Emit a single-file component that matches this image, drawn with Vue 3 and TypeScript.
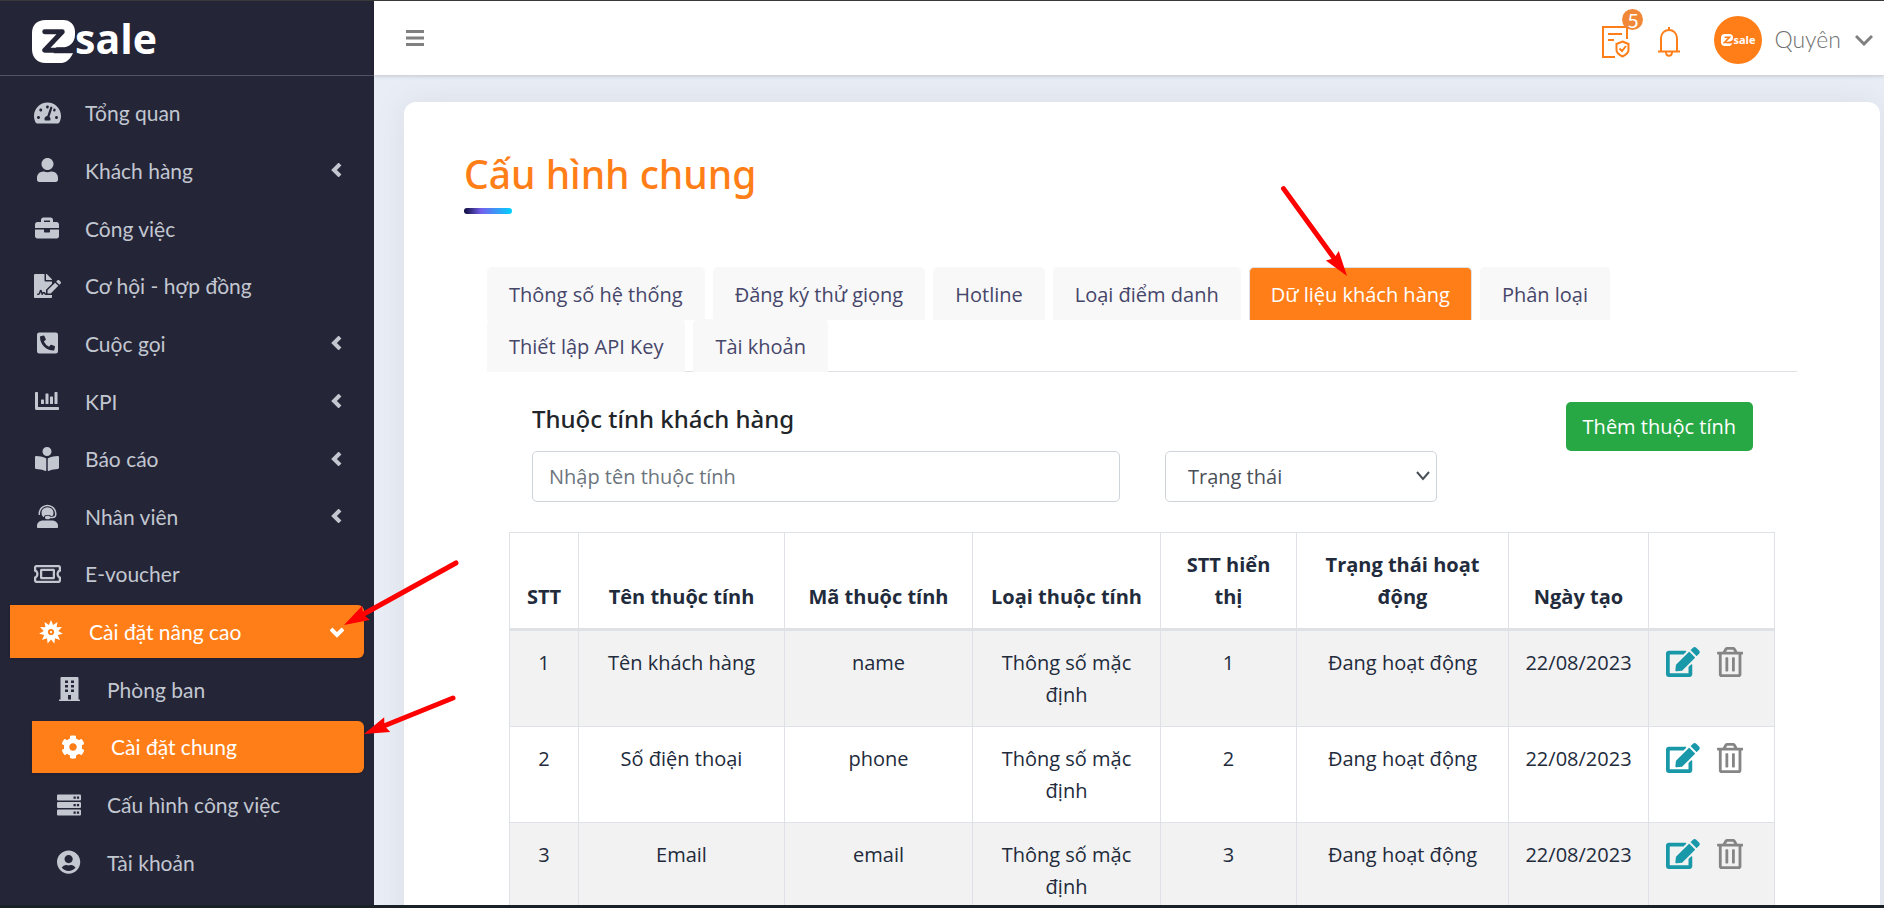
<script setup lang="ts">
import { ref } from 'vue'

interface Icon {
  box: string
  paths: string[]
}

interface NavItem {
  label: string
  icon: string
  expandable?: boolean
  open?: boolean
  children?: NavItem[]
  current?: boolean
}

interface Attribute {
  order: number
  name: string
  code: string
  kind: string
  position: number
  status: string
  created: string
}

interface Arrow {
  x: number
  y: number
  angle: number
  length: number
}

/** Outline of a star with the given number of spikes, centred in a 512 box. */
function starPath(spikes: number, outer: number, inner: number): string {
  const points: string[] = []
  for (let i = 0; i < spikes * 2; i++) {
    const radius = i % 2 === 0 ? outer : inner
    const angle = (Math.PI * i) / spikes - Math.PI / 2
    points.push(`${Math.round(256 + radius * Math.cos(angle))} ${Math.round(256 + radius * Math.sin(angle))}`)
  }
  return `M${points.join('L')}z`
}

const markPath =
  'M14 0h18c7 0 12 5 12 12v3c0 8-6 13-13 13h-6l-3 6h20c-3 6-7 10-12 10H14C5 44 0 38 0 30V14C0 5 5 0 14 0z'
const markStroke = 'M13 12h18L13 31h30'

const icons: Record<string, Icon> = {
  gauge: {
    box: '0 0 576 512',
    paths: [
      'M288 32C128.94 32 0 160.94 0 320c0 52.8 14.25 102.26 39.06 144.8 5.61 9.62 16.3 15.2 27.44 15.2h443c11.14 0 21.83-5.58 27.44-15.2C561.75 422.26 576 372.8 576 320c0-159.06-128.94-288-288-288zm0 64c14.71 0 26.58 10.13 30.32 23.65-1.11 2.26-2.64 4.23-3.45 6.67l-9.22 27.67c-5.13 3.49-10.97 6.01-17.64 6.01-17.67 0-32-14.33-32-32S270.33 96 288 96zM96 384c-17.67 0-32-14.33-32-32s14.33-32 32-32 32 14.33 32 32-14.33 32-32 32zm48-160c-17.67 0-32-14.33-32-32s14.33-32 32-32 32 14.33 32 32-14.33 32-32 32zm246.77-72.41l-61.33 184C343.13 347.33 352 364.54 352 384c0 11.72-3.38 22.55-8.88 32H232.88c-5.5-9.45-8.88-20.28-8.88-32 0-33.94 26.5-61.43 59.9-63.59l61.34-184.01c4.17-12.56 17.73-19.45 30.36-15.17 12.57 4.19 19.35 17.79 15.17 30.36zm14.66 57.2l15.52-46.55c3.47-1.29 7.13-2.23 11.05-2.23 17.67 0 32 14.33 32 32s-14.33 32-32 32c-11.38-.01-20.89-6.28-26.57-15.22zM480 384c-17.67 0-32-14.33-32-32s14.33-32 32-32 32 14.33 32 32-14.33 32-32 32z',
    ],
  },
  user: {
    box: '0 0 448 512',
    paths: [
      'M224 256c70.7 0 128-57.3 128-128S294.7 0 224 0 96 57.3 96 128s57.3 128 128 128zm89.6 32h-16.7c-22.2 10.2-46.9 16-72.9 16s-50.6-5.8-72.9-16h-16.7C60.2 288 0 348.2 0 422.4V464c0 26.5 21.5 48 48 48h352c26.5 0 48-21.5 48-48v-41.6c0-74.2-60.2-134.4-134.4-134.4z',
    ],
  },
  briefcase: {
    box: '0 0 512 512',
    paths: [
      'M320 336c0 8.84-7.16 16-16 16h-96c-8.84 0-16-7.16-16-16v-48H0v144c0 25.6 22.4 48 48 48h416c25.6 0 48-22.4 48-48V288H320v48zm144-208h-80V80c0-25.6-22.4-48-48-48H176c-25.6 0-48 22.4-48 48v48H48c-25.6 0-48 22.4-48 48v80h512v-80c0-25.6-22.4-48-48-48zm-144 0H192V96h128v32z',
    ],
  },
  contract: {
    box: '0 0 576 512',
    paths: [
      'M218.17 424.14c-2.95-5.92-8.09-6.52-10.17-6.52s-7.22.59-10.02 6.19l-7.67 15.34c-6.37 12.78-25.03 11.37-29.48-2.09L144 386.59l-10.61 31.88c-5.89 17.66-22.38 29.53-41 29.53H80c-8.84 0-16-7.16-16-16s7.16-16 16-16h12.39c4.83 0 9.11-3.08 10.64-7.66l18.19-54.64c3.3-9.81 12.44-16.41 22.78-16.41s19.48 6.59 22.77 16.41l13.88 41.64c19.75-16.19 54.06-9.7 66 14.16 1.89 3.78 5.49 5.95 9.36 6.26v-82.12l128-127.09V160H248c-13.2 0-24-10.8-24-24V0H24C10.7 0 0 10.7 0 24v464c0 13.3 10.7 24 24 24h336c13.3 0 24-10.7 24-24v-40l-128-.11c-16.12-.31-30.58-9.28-37.83-23.75zM384 121.9c0-6.3-2.5-12.4-7-16.9L279.1 7c-4.5-4.5-10.6-7-17-7H256v128h128v-6.1zm-96 225.06V416h68.99l161.68-162.78-67.88-67.88L288 346.96zm280.54-179.63l-31.87-31.87c-9.94-9.94-26.07-9.94-36.01 0l-27.25 27.25 67.88 67.88 27.25-27.25c9.95-9.94 9.95-26.07 0-36.01z',
    ],
  },
  phone: {
    box: '0 0 448 512',
    paths: [
      'M400 32H48A48 48 0 0 0 0 80v352a48 48 0 0 0 48 48h352a48 48 0 0 0 48-48V80a48 48 0 0 0-48-48zm-16.39 307.37l-15 65A15 15 0 0 1 354 416C194 416 64 286.29 64 126a15.7 15.7 0 0 1 11.63-14.61l65-15A18.23 18.23 0 0 1 144 96a16.27 16.27 0 0 1 13.79 9.09l30 70A17.9 17.9 0 0 1 189 181a17 17 0 0 1-5.5 11.61l-37.89 31a231.91 231.91 0 0 0 110.78 110.78l31-37.89A17 17 0 0 1 299 291a17.85 17.85 0 0 1 5.91 1.21l70 30A16.25 16.25 0 0 1 384 336a17.41 17.41 0 0 1-.39 3.37z',
    ],
  },
  chart: {
    box: '0 0 512 512',
    paths: [
      'M332.8 320h38.4c6.4 0 12.8-6.4 12.8-12.8V172.8c0-6.4-6.4-12.8-12.8-12.8h-38.4c-6.4 0-12.8 6.4-12.8 12.8v134.4c0 6.4 6.4 12.8 12.8 12.8zm96 0h38.4c6.4 0 12.8-6.4 12.8-12.8V76.8c0-6.4-6.4-12.8-12.8-12.8h-38.4c-6.4 0-12.8 6.4-12.8 12.8v230.4c0 6.4 6.4 12.8 12.8 12.8zm-288 0h38.4c6.4 0 12.8-6.4 12.8-12.8v-70.4c0-6.4-6.4-12.8-12.8-12.8h-38.4c-6.4 0-12.8 6.4-12.8 12.8v70.4c0 6.4 6.4 12.8 12.8 12.8zm96 0h38.4c6.4 0 12.8-6.4 12.8-12.8V108.8c0-6.4-6.4-12.8-12.8-12.8h-38.4c-6.4 0-12.8 6.4-12.8 12.8v198.4c0 6.4 6.4 12.8 12.8 12.8zM496 384H64V80c0-8.84-7.16-16-16-16H16C7.16 64 0 71.16 0 80v336c0 17.67 14.33 32 32 32h464c8.84 0 16-7.16 16-16v-32c0-8.84-7.16-16-16-16z',
    ],
  },
  reader: {
    box: '0 0 512 512',
    paths: [
      'M352 96c0-53.02-42.98-96-96-96s-96 42.98-96 96 42.98 96 96 96 96-42.98 96-96zM233.59 241.1c-59.33-36.32-155.43-46.3-203.79-49.05C13.55 191.13 0 203.51 0 219.14v222.8c0 14.33 11.59 26.28 26.49 27.05 43.66 2.29 131.99 10.68 193.04 41.43 9.37 4.72 20.48-1.71 20.48-11.87V252.56c-.01-4.67-2.32-8.95-6.42-11.46zm248.61-49.05c-48.35 2.74-144.46 12.73-203.78 49.05-4.1 2.51-6.41 6.96-6.41 11.63v245.79c0 10.19 11.14 16.63 20.54 11.9 61.04-30.72 149.32-39.11 192.97-41.4 14.9-.78 26.49-12.73 26.49-27.06V219.14c-.01-15.63-13.56-28.01-29.81-27.09z',
    ],
  },
  agent: {
    box: '0 0 448 512',
    paths: [
      'M32 208c0-106 86-192 192-192s192 86 192 192v16c0 44-36 80-80 80h-56c-8 14-20 20-34 20h-36c-22 0-40-16-40-36s18-38 40-38h36c14 0 26 8 34 20h56c27 0 48-21 48-48v-14c0-88-72-160-160-160S64 120 64 208v24H48c-10 0-16-8-16-16z',
      'M96 184a128 116 0 0 1 256 0c0 30-6 52-20 72h-34c-10-14-26-22-46-22h-48c-30 0-52 18-58 46-32-20-50-54-50-96z',
      'M128 352h192c70 0 128 48 128 108v28c0 14-10 24-24 24H24c-14 0-24-10-24-24v-28c0-60 58-108 128-108z',
    ],
  },
  ticket: {
    box: '0 0 576 512',
    paths: [
      'M48 64h480c26 0 48 22 48 48v88c-30 0-48 26-48 56s18 56 48 56v88c0 26-22 48-48 48H48c-26 0-48-22-48-48v-88c30 0 48-26 48-56s-18-56-48-56v-88c0-26 22-48 48-48zm0 48v52c30 18 48 54 48 92s-18 74-48 92v52h480v-52c-30-18-48-54-48-92s18-74 48-92v-52z',
      'M160 144h256c18 0 32 14 32 32v160c0 18-14 32-32 32H160c-18 0-32-14-32-32V176c0-18 14-32 32-32zm16 48v128h224V192z',
    ],
  },
  burst: {
    box: '0 0 512 512',
    paths: [
      starPath(11, 256, 158) + 'M256 190a66 66 0 1 0 0 132 66 66 0 0 0 0-132zm0 42a24 24 0 1 1 0 48 24 24 0 0 1 0-48z',
    ],
  },
  building: {
    box: '0 0 448 512',
    paths: [
      'M436 480h-20V24c0-13-11-24-24-24H56C43 0 32 11 32 24v456H12c-7 0-12 5-12 12v20h448v-20c0-7-5-12-12-12zM128 76h64v52h-64zm0 96h64v52h-64zm0 96h64v52h-64zm128-192h64v52h-64zm0 96h64v52h-64zm0 96h64v52h-64zM192 384h64v96h-64z',
    ],
  },
  cog: {
    box: '0 0 512 512',
    paths: [
      'M487.4 315.7l-42.6-24.6c4.3-23.2 4.3-47 0-70.2l42.6-24.6c4.9-2.8 7.1-8.6 5.5-14-11.1-35.6-30-67.8-54.7-94.6-3.8-4.1-10-5.1-14.8-2.3L380.8 110c-17.9-15.4-38.5-27.3-60.8-35.1V25.8c0-5.6-3.9-10.5-9.4-11.7-36.7-8.2-74.3-7.8-109.2 0-5.5 1.2-9.4 6.1-9.4 11.7V75c-22.2 7.9-42.8 19.8-60.8 35.1L88.7 85.5c-4.9-2.8-11-1.9-14.8 2.3-24.7 26.7-43.6 58.9-54.7 94.6-1.7 5.4.6 11.2 5.5 14L67.3 221c-4.3 23.2-4.3 47 0 70.2l-42.6 24.6c-4.9 2.8-7.1 8.6-5.5 14 11.1 35.6 30 67.8 54.7 94.6 3.8 4.1 10 5.1 14.8 2.3l42.6-24.6c17.9 15.4 38.5 27.3 60.8 35.1v49.2c0 5.6 3.9 10.5 9.4 11.7 36.7 8.2 74.3 7.8 109.2 0 5.5-1.2 9.4-6.1 9.4-11.7v-49.2c22.2-7.9 42.8-19.8 60.8-35.1l42.6 24.6c4.9 2.8 11 1.9 14.8-2.3 24.7-26.7 43.6-58.9 54.7-94.6 1.5-5.5-.7-11.3-5.6-14.1zM256 336c-44.1 0-80-35.9-80-80s35.9-80 80-80 80 35.9 80 80-35.9 80-80 80z',
    ],
  },
  server: {
    box: '0 0 512 512',
    paths: [
      'M24 32h464a24 24 0 0 1 24 24v80a24 24 0 0 1-24 24H24a24 24 0 0 1-24-24V56a24 24 0 0 1 24-24zm328 40v48h48V72zm72 0v48h48V72z',
      'M24 192h464a24 24 0 0 1 24 24v80a24 24 0 0 1-24 24H24a24 24 0 0 1-24-24v-80a24 24 0 0 1 24-24zm328 40v48h48v-48zm72 0v48h48v-48z',
      'M24 352h464a24 24 0 0 1 24 24v80a24 24 0 0 1-24 24H24a24 24 0 0 1-24-24v-80a24 24 0 0 1 24-24zm328 40v48h48v-48zm72 0v48h48v-48z',
    ],
  },
  account: {
    box: '0 0 496 512',
    paths: [
      'M248 8C111 8 0 119 0 256s111 248 248 248 248-111 248-248S385 8 248 8zm0 96c48.6 0 88 39.4 88 88s-39.4 88-88 88-88-39.4-88-88 39.4-88 88-88zm0 344c-58.7 0-111.3-26.6-146.5-68.2 18.8-35.4 55.6-59.8 98.5-59.8 2.4 0 4.8.4 7.1 1.1 13 4.2 26.6 6.9 40.9 6.9 14.3 0 28-2.7 40.9-6.9 2.3-.7 4.7-1.1 7.1-1.1 42.9 0 79.7 24.4 98.5 59.8C359.3 421.4 306.7 448 248 448z',
    ],
  },
}

const nav = ref<NavItem[]>([
  { label: 'Tổng quan', icon: 'gauge' },
  { label: 'Khách hàng', icon: 'user', expandable: true },
  { label: 'Công việc', icon: 'briefcase' },
  { label: 'Cơ hội - hợp đồng', icon: 'contract' },
  { label: 'Cuộc gọi', icon: 'phone', expandable: true },
  { label: 'KPI', icon: 'chart', expandable: true },
  { label: 'Báo cáo', icon: 'reader', expandable: true },
  { label: 'Nhân viên', icon: 'agent', expandable: true },
  { label: 'E-voucher', icon: 'ticket' },
  {
    label: 'Cài đặt nâng cao',
    icon: 'burst',
    expandable: true,
    open: true,
    current: true,
    children: [
      { label: 'Phòng ban', icon: 'building' },
      { label: 'Cài đặt chung', icon: 'cog', current: true },
      { label: 'Cấu hình công việc', icon: 'server' },
      { label: 'Tài khoản', icon: 'account' },
    ],
  },
])

const tabs = [
  'Thông số hệ thống',
  'Đăng ký thử giọng',
  'Hotline',
  'Loại điểm danh',
  'Dữ liệu khách hàng',
  'Phân loại',
  'Thiết lập API Key',
  'Tài khoản',
]
const activeTab = ref('Dữ liệu khách hàng')

const query = ref('')
const status = ref('')

const rows: Attribute[] = [
  { order: 1, name: 'Tên khách hàng', code: 'name' },
  { order: 2, name: 'Số điện thoại', code: 'phone' },
  { order: 3, name: 'Email', code: 'email' },
].map((row) => ({
  ...row,
  kind: 'Thông số mặc định',
  position: row.order,
  status: 'Đang hoạt động',
  created: '22/08/2023',
}))

const arrows: Arrow[] = [
  { x: 1347, y: 276, angle: 54, length: 108 },
  { x: 344, y: 625, angle: 151, length: 128 },
  { x: 364, y: 734, angle: 158, length: 96 },
]
</script>

<template>
  <div class="page">
    <aside class="sidebar">
      <a class="brand" href="#" aria-label="zsale">
        <svg class="brand-mark" viewBox="0 0 44 44" aria-hidden="true">
          <path :d="markPath" />
          <path class="brand-z" :d="markStroke" />
        </svg>
        <span class="brand-word">sale</span>
      </a>
      <nav aria-label="Menu">
        <ul class="menu">
          <li v-for="item in nav" :key="item.label" class="menu-entry">
            <a href="#" class="menu-link" :class="{ current: item.current }" :aria-expanded="item.expandable ? !!item.open : undefined">
              <span class="menu-icon">
                <svg :viewBox="icons[item.icon].box" aria-hidden="true">
                  <path v-for="d in icons[item.icon].paths" :key="d" :d="d" fill-rule="evenodd" />
                </svg>
              </span>
              <span class="menu-label">{{ item.label }}</span>
              <svg v-if="item.expandable" class="caret" :class="{ open: item.open }" viewBox="0 0 14 14" aria-hidden="true">
                <path d="M10 1L4 7l6 6" />
              </svg>
            </a>
            <ul v-if="item.children" class="submenu">
              <li v-for="child in item.children" :key="child.label" class="submenu-entry">
                <a href="#" class="menu-link sub" :class="{ current: child.current }">
                  <span class="menu-icon">
                    <svg :viewBox="icons[child.icon].box" aria-hidden="true">
                      <path v-for="d in icons[child.icon].paths" :key="d" :d="d" fill-rule="evenodd" />
                    </svg>
                  </span>
                  <span class="menu-label">{{ child.label }}</span>
                </a>
              </li>
            </ul>
          </li>
        </ul>
      </nav>
    </aside>

    <div class="content">
      <header class="topbar">
        <button type="button" class="plain" aria-label="Menu">
          <svg class="bars" viewBox="0 0 18 16" aria-hidden="true"><path d="M0 1.5h18M0 8h18M0 14.5h18" /></svg>
        </button>
        <div class="topbar-tools">
          <button type="button" class="plain tasks" aria-label="5">
            <svg viewBox="0 0 28 32" aria-hidden="true">
              <path d="M25 13V1H1v30h12M6 8h14M6 14h6" />
              <path d="M20.5 15.5l6 2.500v6c0 3-3 5-6 6.500-3-1.500-6-3.500-6-6.500v-6z" />
              <path d="M17.500 22.500l2.500 2.500 4-5" />
            </svg>
            <span class="badge">5</span>
          </button>
          <button type="button" class="plain bell" aria-label="Chuông">
            <svg viewBox="0 0 22 30" aria-hidden="true">
              <path d="M3 24V11c0-5 4-8 8-8s8 3 8 8v13M0 24.5h22M11 3V0M8 25c0 5 6 5 6 0" />
            </svg>
          </button>
          <button type="button" class="plain account">
            <span class="avatar">
              <svg class="avatar-mark" viewBox="0 0 44 44" aria-hidden="true">
                <path :d="markPath" />
                <path class="avatar-z" :d="markStroke" />
              </svg>
              <span class="avatar-word">sale</span>
            </span>
            <span class="account-name">Quyên</span>
            <svg class="account-caret" viewBox="0 0 18 12" aria-hidden="true"><path d="M1 2l8 8 8-8" /></svg>
          </button>
        </div>
      </header>

      <main class="main">
        <section class="card">
          <h1 class="title">Cấu hình chung</h1>
          <div class="tabs-area">
            <div class="tabs" role="tablist">
              <button
                v-for="tab in tabs"
                :key="tab"
                type="button"
                role="tab"
                class="tab"
                :class="{ active: tab === activeTab }"
                :aria-selected="tab === activeTab"
                @click="activeTab = tab"
              >
                {{ tab }}
              </button>
            </div>

            <div class="panel" role="tabpanel">
              <div class="panel-head">
                <h2>Thuộc tính khách hàng</h2>
                <button type="button" class="add">Thêm thuộc tính</button>
              </div>
              <form class="filters" @submit.prevent>
                <input v-model="query" class="field search" type="text" aria-label="Nhập tên thuộc tính" placeholder="Nhập tên thuộc tính" />
                <div class="select-wrap">
                  <select v-model="status" class="field" aria-label="Trạng thái">
                    <option value="">Trạng thái</option>
                    <option value="active">Đang hoạt động</option>
                  </select>
                  <svg class="select-caret" viewBox="0 0 14 10" aria-hidden="true"><path d="M1 1l6 7 6-7" /></svg>
                </div>
              </form>
              <table class="grid">
                <colgroup>
                  <col class="c-order" />
                  <col class="c-name" />
                  <col class="c-code" />
                  <col class="c-code" />
                  <col class="c-position" />
                  <col class="c-status" />
                  <col class="c-date" />
                  <col class="c-actions" />
                </colgroup>
                <thead>
                  <tr>
                    <th scope="col">STT</th>
                    <th scope="col">Tên thuộc tính</th>
                    <th scope="col">Mã thuộc tính</th>
                    <th scope="col">Loại thuộc tính</th>
                    <th scope="col">STT hiển thị</th>
                    <th scope="col">Trạng thái hoạt động</th>
                    <th scope="col">Ngày tạo</th>
                    <td></td>
                  </tr>
                </thead>
                <tbody>
                  <tr v-for="row in rows" :key="row.order">
                    <td>{{ row.order }}</td>
                    <td>{{ row.name }}</td>
                    <td>{{ row.code }}</td>
                    <td>{{ row.kind }}</td>
                    <td>{{ row.position }}</td>
                    <td>{{ row.status }}</td>
                    <td>{{ row.created }}</td>
                    <td>
                      <div class="actions">
                        <button type="button" class="plain edit" aria-label="Sửa">
                          <svg viewBox="0 0 576 512" aria-hidden="true">
                            <path d="M402.6 83.2l90.2 90.2c3.8 3.8 3.8 10 0 13.8L274.4 405.6l-92.8 10.3c-12.4 1.4-22.9-9.1-21.5-21.5l10.3-92.8L388.8 83.2c3.8-3.8 10-3.8 13.8 0zm162-22.9l-48.8-48.8c-15.2-15.2-39.9-15.2-55.2 0l-35.4 35.4c-3.8 3.8-3.8 10 0 13.8l90.2 90.2c3.8 3.8 10 3.8 13.8 0l35.4-35.4c15.2-15.3 15.2-40 0-55.2zM384 346.2V448H64V128h229.8c3.2 0 6.2-1.3 8.5-3.5l40-40c7.6-7.6 2.2-20.5-8.5-20.5H48C21.5 64 0 85.5 0 112v352c0 26.5 21.5 48 48 48h352c26.5 0 48-21.5 48-48V306.2c0-10.7-12.9-16-20.5-8.5l-40 40c-2.2 2.3-3.5 5.3-3.5 8.5z" />
                          </svg>
                        </button>
                        <button type="button" class="plain remove" aria-label="Xóa">
                          <svg viewBox="0 0 448 512" aria-hidden="true">
                            <path d="M268 416h24a12 12 0 0 0 12-12V188a12 12 0 0 0-12-12h-24a12 12 0 0 0-12 12v216a12 12 0 0 0 12 12zM432 80h-82.41l-34-56.7A48 48 0 0 0 274.41 0H173.59a48 48 0 0 0-41.16 23.3L98.41 80H16A16 16 0 0 0 0 96v16a16 16 0 0 0 16 16h16v336a48 48 0 0 0 48 48h288a48 48 0 0 0 48-48V128h16a16 16 0 0 0 16-16V96a16 16 0 0 0-16-16zM171.84 50.91A6 6 0 0 1 177 48h94a6 6 0 0 1 5.15 2.91L293.61 80H154.39zM368 464H80V128h288zm-212-48h24a12 12 0 0 0 12-12V188a12 12 0 0 0-12-12h-24a12 12 0 0 0-12 12v216a12 12 0 0 0 12 12z" />
                          </svg>
                        </button>
                      </div>
                    </td>
                  </tr>
                </tbody>
              </table>
            </div>
          </div>
        </section>
      </main>
    </div>

    <svg class="pointers" aria-hidden="true">
      <g v-for="arrow in arrows" :key="arrow.angle" :transform="`translate(${arrow.x} ${arrow.y}) rotate(${arrow.angle})`">
        <line :x1="-arrow.length" y1="0" x2="-20" y2="0" />
        <path d="M0 0L-25 -8L-22 0L-25 8z" />
      </g>
    </svg>
  </div>
</template>

<style>
body {
  margin: 0;
}
</style>

<style scoped>
.page,
.page * {
  box-sizing: border-box;
}

.page {
  position: relative;
  display: flex;
  height: 100vh;
  overflow: hidden;
  border-top: 1px solid #3a3838;
  border-bottom: 3px solid #1a2126;
  font-family: 'Open Sans', 'Noto Sans', sans-serif;
  font-size: 20px;
  color: #222b3c;
}

.plain {
  padding: 0;
  border: 0;
  background: none;
  cursor: pointer;
}

svg {
  display: block;
}

ul {
  margin: 0;
  padding: 0;
  list-style: none;
}

/* Sidebar */
.sidebar {
  display: flex;
  flex: 0 0 374px;
  flex-direction: column;
  background: #252538;
  font-family: Lato, 'Noto Sans', sans-serif;
  font-size: 21px;
  color: #c2c7d0;
}

.brand {
  display: flex;
  align-items: center;
  flex: 0 0 75px;
  padding: 6px 32px 0;
  border-bottom: 1px solid #4f5460;
  color: #fff;
  text-decoration: none;
}

.brand-mark {
  width: 43px;
  height: 43px;
  fill: #fff;
}

.brand-z {
  fill: none;
  stroke: #252538;
  stroke-width: 5;
  stroke-linejoin: round;
  stroke-linecap: round;
}

.brand-word {
  padding-bottom: 6px;
  font-family: 'Open Sans', sans-serif;
  font-size: 41px;
  font-weight: 700;
  line-height: 44px;
}

nav {
  flex: 1;
  padding: 8px 10px 14px;
}

.menu {
  display: grid;
  height: 100%;
  grid-auto-rows: minmax(57px, 1fr);
  align-items: center;
}

.menu-entry,
.submenu,
.submenu-entry {
  display: contents;
}

.menu-link {
  display: flex;
  align-items: center;
  height: 53px;
  padding: 0 20px 0 22px;
  border-radius: 0 6px 6px 0;
  color: inherit;
  text-decoration: none;
}

.menu-link.sub {
  height: 52px;
  margin-left: 22px;
}

.menu-link.current {
  padding-left: 26px;
  background: #ff7e17;
  box-shadow: 0 1px 3px rgba(0, 0, 0, 0.2);
  color: #fff;
}

.menu-icon {
  display: flex;
  justify-content: center;
  width: 30px;
  margin-right: 23px;
}

.menu-icon svg {
  height: 24px;
  fill: currentColor;
}

.menu-label {
  flex: 1;
  white-space: nowrap;
}

.caret {
  width: 14px;
  height: 14px;
  fill: none;
  stroke: currentColor;
  stroke-width: 4;
}

.caret.open {
  transform: rotate(-90deg);
}

/* Top bar */
.content {
  display: flex;
  flex: 1;
  flex-direction: column;
  min-width: 0;
  background: #e9edf5;
}

.topbar {
  z-index: 1;
  display: flex;
  align-items: center;
  justify-content: space-between;
  flex: 0 0 74px;
  padding: 0 11px 0 32px;
  background: #fff;
  box-shadow: 0 1px 4px rgba(0, 0, 0, 0.18);
}

.bars {
  width: 18px;
  height: 16px;
  fill: none;
  stroke: #808080;
  stroke-width: 3;
}

.topbar-tools {
  display: flex;
  align-items: center;
  padding-top: 4px;
}

.tasks {
  position: relative;
  margin-right: 28px;
}

.tasks,
.bell {
  margin-top: 4px;
}

.tasks svg,
.bell svg {
  fill: none;
  stroke: #ff7e17;
  stroke-width: 2;
}

.tasks svg {
  width: 28px;
  height: 32px;
}

.badge {
  position: absolute;
  top: -17px;
  right: -13px;
  width: 21px;
  height: 21px;
  border-radius: 50%;
  background: #f08838;
  font-family: Lato, sans-serif;
  font-size: 20px;
  line-height: 22px;
  text-align: center;
  color: #fff;
}

.bell {
  margin-right: 34px;
}

.bell svg {
  width: 22px;
  height: 30px;
}

.account {
  display: flex;
  align-items: center;
}

.avatar {
  display: flex;
  align-items: center;
  justify-content: center;
  width: 48px;
  height: 48px;
  margin-right: 12px;
  border-radius: 50%;
  background: #ff7e17;
  color: #fff;
}

.avatar-mark {
  width: 12px;
  height: 12px;
  fill: #fff;
}

.avatar-z {
  fill: none;
  stroke: #ff7e17;
  stroke-width: 6;
}

.avatar-word {
  font-family: 'Open Sans', sans-serif;
  font-size: 11px;
  font-weight: 700;
  line-height: 12px;
}

.account-name {
  margin-right: 14px;
  padding-bottom: 2px;
  font-family: Lato, 'Noto Sans', sans-serif;
  font-size: 23px;
  font-weight: 300;
  color: #707070;
}

.account-caret {
  width: 18px;
  height: 12px;
  fill: none;
  stroke: #808080;
  stroke-width: 3;
}

/* Card */
.main {
  flex: 1;
  min-height: 0;
  overflow-y: auto;
  padding: 27px 4px 0 30px;
  scrollbar-width: none;
}

.card {
  padding: 48px 60px 40px;
  border-radius: 12px;
  background: #fff;
  box-shadow: 0 0 30px rgba(120, 130, 140, 0.13);
}

.title,
h2 {
  font-family: 'Noto Sans', sans-serif;
  font-weight: 500;
}

.title {
  margin: 0;
  font-size: 39px;
  line-height: 48px;
  color: #ff7e17;
}

.title::after {
  content: '';
  display: block;
  width: 48px;
  height: 6px;
  margin-top: 10px;
  border-radius: 3px;
  background: linear-gradient(to right, #0c0b3c, #7460ee 36%, #00d2ff);
}

.tabs-area {
  padding: 53px 23px 0;
}

.tabs {
  display: flex;
  flex-wrap: wrap;
  column-gap: 8px;
  border-bottom: 1px solid #dee2e6;
}

.tab {
  height: 53px;
  margin-bottom: -1px;
  padding: 0 21px;
  border: 1px solid #f8f8f8;
  border-bottom: 0;
  border-radius: 5px 5px 0 0;
  background: #f8f8f8;
  font-family: inherit;
  font-size: 20px;
  color: #46466a;
  cursor: pointer;
}

.tab.active {
  border-color: #dee2e6;
  background: #ff7e17;
  color: #fff;
}

.panel {
  padding: 30px 22px 0;
}

.panel-head,
.filters {
  padding: 0 22px 0 23px;
}

.panel-head {
  display: flex;
  align-items: flex-start;
  justify-content: space-between;
}

h2 {
  margin: 0;
  font-size: 24px;
  line-height: 34px;
  color: #212529;
}

.add {
  height: 49px;
  padding: 0 17px;
  border: 0;
  border-radius: 5px;
  background: #28a745;
  font-family: inherit;
  font-size: 20px;
  color: #fff;
  cursor: pointer;
}

.filters {
  display: grid;
  grid-template-columns: repeat(12, 1fr);
  column-gap: 45px;
  margin-bottom: 30px;
}

.field {
  width: 100%;
  height: 51px;
  padding: 0 16px;
  border: 1px solid #ced4da;
  border-radius: 5px;
  background: #fff;
  font-family: inherit;
  font-size: 20px;
  color: #495057;
}

.field::placeholder {
  color: #6c757d;
  opacity: 1;
}

.search {
  grid-column: span 6;
}

.select-wrap {
  position: relative;
  grid-column: span 3;
}

select.field {
  padding: 0 22px;
  appearance: none;
}

.select-caret {
  position: absolute;
  top: 20px;
  right: 7px;
  width: 14px;
  height: 10px;
  fill: none;
  stroke: #495057;
  stroke-width: 2;
  pointer-events: none;
}

/* Table */
.grid {
  width: 100%;
  border-collapse: collapse;
  table-layout: fixed;
  text-align: center;
}

.c-order {
  width: 69px;
}

.c-name {
  width: 206px;
}

.c-code {
  width: 188px;
}

.c-position {
  width: 136px;
}

.c-status {
  width: 212px;
}

.c-date {
  width: 140px;
}

.c-actions {
  width: 126px;
}

.grid th,
.grid td {
  padding: 16px 12px 15px;
  border: 1px solid #dee2e6;
  line-height: 32px;
  vertical-align: top;
}

.grid thead th,
.grid thead td {
  border-bottom-width: 3px;
  font-weight: 700;
  vertical-align: bottom;
}

.grid tbody tr:nth-child(odd) {
  background: #f2f2f2;
}

.actions {
  display: flex;
  gap: 17px;
  padding-left: 5px;
}

.actions svg {
  height: 30px;
}

.edit {
  fill: #1898a8;
}

.remove {
  fill: #858585;
}

/* Callout arrows drawn over the page */
.pointers {
  position: absolute;
  top: -1px;
  left: 0;
  width: 100%;
  height: 100%;
  pointer-events: none;
  fill: #f00;
}

.pointers line {
  stroke: #f00;
  stroke-width: 5;
  stroke-linecap: round;
}
</style>
